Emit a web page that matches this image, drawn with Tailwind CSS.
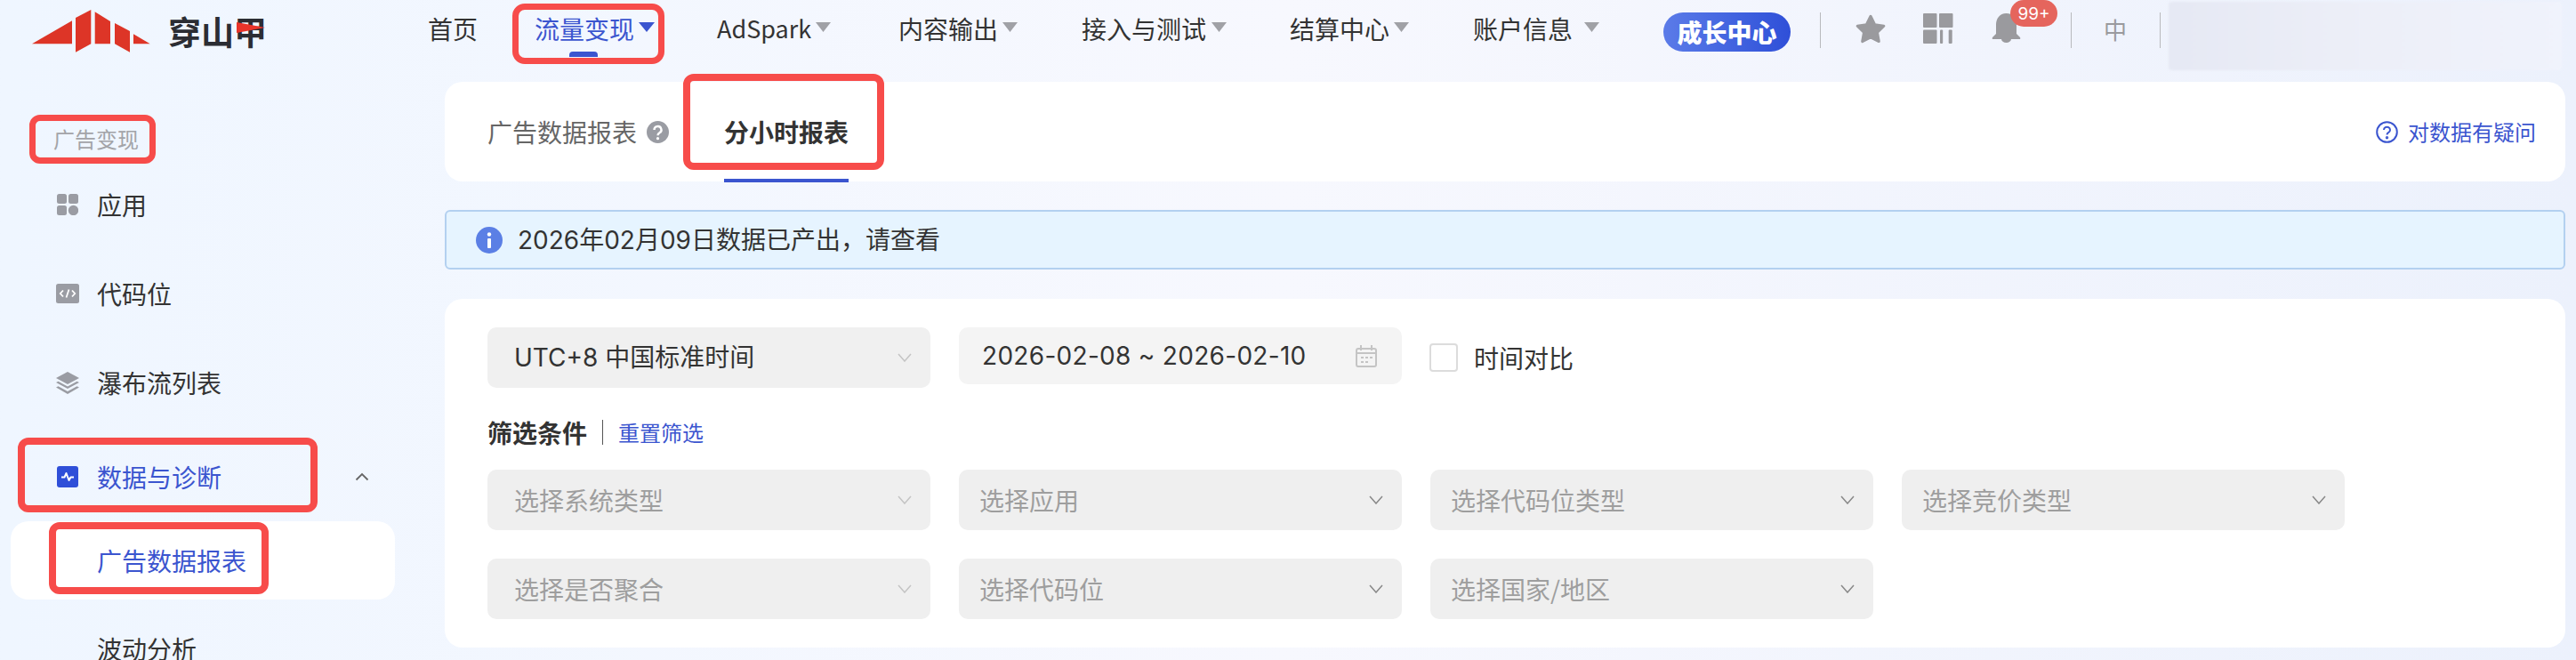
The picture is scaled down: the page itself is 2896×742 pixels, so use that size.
<!DOCTYPE html>
<html lang="zh">
<head>
<meta charset="utf-8">
<script src="https://cdn.jsdelivr.net/npm/@tailwindcss/browser@4"></script>
<title>穿山甲</title>
</head>
<body class="m-0">
<div class="relative w-[2896px] h-[742px] overflow-hidden bg-gradient-to-r from-[#eff6ff] via-[#f7f8fe] to-[#ecf1fc] font-['Inter','Noto_Sans_CJK_SC',sans-serif] text-[#333]">

  <!-- Top bar -->
  <header class="relative flex h-[92px] items-start">
    <div class="w-[481px] shrink-0 flex items-start pl-[36px] pt-[11px]">
      <svg width="134" height="48" viewBox="36 11 134 48" class="shrink-0"><polygon points="36,49.300 81,23.300 81,49.300" fill="#dd3527"/><polygon points="85,20 102.300,11 102.300,49.300 85,58.700" fill="#dd3527"/><polygon points="106.700,13.300 124,24 124,49.300 106.700,49.300" fill="#dd3527"/><polygon points="129,26 146,35 146,58.700 129,49.300" fill="#dd3527"/><polygon points="150,38.300 168.700,49.300 150,49.300" fill="#dd3527"/></svg>
      <div class="relative ml-[19px] mt-[1px] text-[37px] leading-[46px] font-bold text-[#2b2d33] font-['Noto_Sans_CJK_SC']">穿山甲<svg class="absolute left-[77px] top-[13px]" width="32" height="12" viewBox="0 0 32 12"><polygon points="0,0 32,6 0,12" fill="#e8342a"/></svg></div>
    </div>
    <nav class="flex items-start text-[28px] leading-[40px] pt-[12px] text-[#333] font-['Noto_Sans_CJK_SC']">
      <span class="w-[120px]">首页</span>
      <span class="w-[205px] flex items-center text-[#3b55cf]">流量变现<svg class="ml-[5px] mb-[4px]" width="18" height="11" viewBox="0 0 18 11"><path d="M0 0h18l-9 11z" fill="#3b55cf"/></svg></span>
      <span class="w-[204px] flex items-center text-[27px]">AdSpark<svg class="ml-[5px] mb-[4px]" width="17" height="11" viewBox="0 0 17 11"><path d="M0 0h17l-8.500 11z" fill="#a0a1a6"/></svg></span>
      <span class="w-[206px] flex items-center">内容输出<svg class="ml-[5px] mb-[4px]" width="17" height="11" viewBox="0 0 17 11"><path d="M0 0h17l-8.500 11z" fill="#a0a1a6"/></svg></span>
      <span class="w-[234px] flex items-center">接入与测试<svg class="ml-[6px] mb-[4px]" width="17" height="11" viewBox="0 0 17 11"><path d="M0 0h17l-8.500 11z" fill="#a0a1a6"/></svg></span>
      <span class="w-[206px] flex items-center">结算中心<svg class="ml-[5px] mb-[4px]" width="17" height="11" viewBox="0 0 17 11"><path d="M0 0h17l-8.500 11z" fill="#a0a1a6"/></svg></span>
      <span class="w-[214px] flex items-center">账户信息<svg class="ml-[13px] mb-[4px]" width="17" height="11" viewBox="0 0 17 11"><path d="M0 0h17l-8.500 11z" fill="#a0a1a6"/></svg></span>
    </nav>
    <div class="flex items-start pt-[14px]">
      <span class="flex h-[44px] w-[143px] items-center justify-center rounded-full bg-gradient-to-r from-[#5b7be8] to-[#2f4fd8] text-[28px] font-black text-white font-['Noto_Sans_CJK_SC']">成长中心</span>
      <span class="ml-[33px] h-[40px] w-[1px] bg-[#b8b9bd]"></span>
      <svg class="ml-[38px] mt-[2px]" width="36" height="33" viewBox="0 0 24 22"><path d="M12 1.500l3.100 6.300 6.800 1-4.900 4.800 1.200 6.800L12 17.200l-6.200 3.200L7 13.600 2.100 8.800l6.800-1z" fill="#9a9a9e" stroke="#9a9a9e" stroke-width="2" stroke-linejoin="round"/></svg>
      <svg class="ml-[41px] mt-[1px]" width="34" height="34" viewBox="0 0 34 34" fill="#9a9a9e"><rect width="15.500" height="16" rx="1"/><rect x="18" width="15.500" height="16" rx="1"/><rect y="18.500" width="15.500" height="15.500" rx="1"/><rect x="19" y="18.500" width="3.200" height="15.500" rx="1"/><rect x="28.700" y="18.500" width="4" height="15.500" rx="1"/></svg>
      <div class="relative ml-[43px] mt-[1px] h-[33px] w-[33px]">
        <svg width="33" height="33" viewBox="0 0 33 33"><path d="M16.500 0C9 0 5 6 5 13v10l-4 4q-1 2 1 2h29q2 0 1-2l-4-4V13C28 6 24 0 16.500 0zM11 29h11a5.500 4 0 0 1-11 0z" fill="#9a9a9e"/></svg>
        <span class="absolute left-[21px] top-[-15px] flex h-[30px] w-[53px] items-center justify-center rounded-full bg-[#e5655d] text-[19px] leading-none text-white font-['Inter']">99+</span>
      </div>
      <span class="ml-[56px] h-[40px] w-[1px] bg-[#b8b9bd]"></span>
      <span class="ml-[36px] w-[26px] text-[26px] leading-[38px] text-[#9a9a9e] font-['Noto_Sans_CJK_SC']">中</span>
      <span class="ml-[37px] h-[40px] w-[1px] bg-[#b8b9bd]"></span>
      <div class="ml-[9px] mt-[-12px] h-[77px] w-[442px] bg-gradient-to-r from-[#e6e9f4] via-[#edeff8] to-[#f0f3fc] blur-[1px] rounded-sm"></div>
    </div>
    <span class="absolute left-[640px] top-[58px] h-[6px] w-[32px] rounded-t-[4px] bg-[#3b55cf]"></span>
  </header>

  <div class="flex items-start">
    <!-- Sidebar -->
    <aside class="w-[500px] shrink-0 pl-[12px] font-['Noto_Sans_CJK_SC']">
      <div class="h-[46px] mt-[41px] pl-[48px] text-[24px] leading-[46px] text-[#a3a4a8]">广告变现</div>
      <ul class="mt-[3px] text-[28px] w-[432px] text-[#333]">
        <li class="flex h-[96px] items-center pl-[52px]">
          <svg class="mr-[21px]" width="24" height="24" viewBox="0 0 24 24" fill="#9a9ca3"><rect width="11" height="11" rx="2.500"/><rect x="13" width="11" height="11" rx="2.500"/><rect y="13" width="11" height="11" rx="2.500"/><circle cx="18.500" cy="18.500" r="5.700"/></svg>应用
        </li>
        <li class="flex h-[104px] items-center pl-[51px]">
          <svg class="mr-[20px]" width="26" height="22" viewBox="0 0 26 22"><rect width="26" height="22" rx="2.500" fill="#9a9ca3"/><path d="M8 7.500L4.800 11 8 14.500M18 7.500l3.200 3.500-3.200 3.500M14.500 6.500l-3 9" stroke="#fff" stroke-width="1.800" fill="none"/></svg>代码位
        </li>
        <li class="flex h-[96px] items-center pl-[51px]">
          <svg class="mr-[20px]" width="26" height="25" viewBox="0 0 26 25" fill="#9a9ca3"><path d="M13 0l13 7-13 7L0 7z"/><path d="M2.500 10.800L13 16.500l10.500-5.700L26 12l-13 7-13-7z"/><path d="M2.500 16.300L13 22l10.500-5.700L26 17.500 13 25 0 17.500z"/></svg>瀑布流列表
        </li>
        <li class="flex h-[116px] items-center pl-[52px] text-[#3b55cf] relative">
          <svg class="mr-[21px]" width="24" height="24" viewBox="0 0 24 24"><rect width="24" height="24" rx="3" fill="#2f4fd8"/><path d="M5 12.500h3.500l2-4.500 3 8 2-3.500H19" stroke="#fff" stroke-width="2" fill="none" stroke-linejoin="round"/></svg>数据与诊断
          <svg class="absolute left-[387px] top-[53px]" width="16" height="10" viewBox="0 0 16 10"><path d="M1.500 8.500L8 2l6.500 6.500" stroke="#666" stroke-width="1.800" fill="none"/></svg>
        </li>
      </ul>
      <div class="flex h-[88px] w-[432px] items-center rounded-[20px] bg-white pl-[97px] text-[28px] text-[#3b55cf] mt-[-8px]">广告数据报表</div>
      <div class="mt-[35px] pl-[97px] text-[28px] leading-[40px] text-[#333]">波动分析</div>
    </aside>

    <!-- Main -->
    <main class="w-[2384px] font-['Noto_Sans_CJK_SC']">
      <section class="flex h-[112px] items-center justify-between rounded-[20px] bg-white pl-[48px] pr-[33px]">
        <div class="flex items-center h-full">
          <span class="text-[28px] text-[#666]">广告数据报表</span>
          <svg class="ml-[11px]" width="25" height="25" viewBox="0 0 25 25"><circle cx="12.500" cy="12.500" r="12.500" fill="#9a9ca3"/><path d="M8.500 10a4 3.800 0 1 1 6 3.200c-1.300.8-2 1.500-2 3" stroke="#fff" stroke-width="2.400" fill="none"/><circle cx="12.500" cy="19.700" r="1.600" fill="#fff"/></svg>
          <span class="relative ml-[62px] flex h-full items-center text-[28px] font-bold text-[#333]">分小时报表<span class="absolute bottom-[-1px] left-0 right-0 h-[4px] bg-[#3b55cf]"></span></span>
        </div>
        <div class="flex items-center text-[24px] text-[#3b55cf]">
          <svg class="mr-[11px]" width="25" height="25" viewBox="0 0 25 25" fill="none" stroke="#3b55cf" stroke-width="2"><circle cx="12.500" cy="12.500" r="11.300"/><path d="M9 10a3.500 3.300 0 1 1 5.300 2.800c-1.200.7-1.800 1.300-1.800 2.700"/><circle cx="12.500" cy="18.800" r=".7"/></svg>
          对数据有疑问
        </div>
      </section>

      <section class="mt-[32px] flex h-[67px] w-[2384px] items-center rounded-[6px] border-2 border-[#b3d0f0] bg-[#e6f4ff] pl-[33px] text-[28px] text-[#333]">
        <svg class="mr-[17px]" width="30" height="30" viewBox="0 0 30 30"><circle cx="15" cy="15" r="15" fill="#5b7fe5"/><circle cx="15" cy="8.500" r="2.200" fill="#fff"/><rect x="13" y="13" width="4" height="11" rx="1" fill="#fff"/></svg>
        <span class="font-['Inter','Noto_Sans_CJK_SC']">2026年02月09日数据已产出，请查看</span>
      </section>

      <section class="mt-[33px] h-[392px] rounded-[20px] bg-white pl-[48px] pt-[32px]">
        <div class="flex items-start gap-[32px]">
          <div class="flex h-[68px] w-[498px] items-center justify-between rounded-[10px] bg-[#f0f0f0] pl-[30px] pr-[21px] text-[28px] text-[#333]"><span class="font-['Inter','Noto_Sans_CJK_SC']">UTC+8 中国标准时间</span><svg width="16" height="10" viewBox="0 0 16 10"><path d="M1 1l7 8 7-8" stroke="#c4c4c4" stroke-width="1.500" fill="none"/></svg></div>
          <div class="flex h-[64px] w-[498px] items-center justify-between rounded-[10px] bg-[#f4f4f4] pl-[26px] pr-[28px] text-[28px] text-[#333]"><span class="font-['Inter'] tracking-[0.3px]">2026-02-08 ~ 2026-02-10</span><svg width="24" height="25" viewBox="0 0 24 25" fill="none" stroke="#c4c4c4" stroke-width="2"><rect x="1" y="4" width="22" height="20" rx="2"/><path d="M1 9h22M6 0v6M18 0v6"/><path d="M6 14h3M11 14h3M16 14h3M6 19h3M11 19h3" /></svg></div>
          <div class="flex h-[64px] items-center gap-[18px] text-[28px] text-[#333]"><span class="ml-[-1px] h-[32px] w-[32px] rounded-[4px] border-2 border-[#dcdcdc] bg-white mt-[4px]"></span><span class="mt-[4px]">时间对比</span></div>
        </div>
        <div class="mt-[35px] flex h-[30px] items-center">
          <span class="w-[112px] text-[28px] font-bold text-[#333]">筛选条件</span>
          <span class="ml-[17px] h-[28px] w-[1px] bg-[#555]"></span>
          <span class="ml-[17px] text-[24px] text-[#3b55cf]">重置筛选</span>
        </div>
        <div class="mt-[27px] grid w-[2088px] grid-cols-4 gap-[32px] text-[28px] text-[#9e9e9e]">
          <div class="flex h-[68px] items-center justify-between rounded-[10px] bg-[#efefef] pl-[30px] pr-[21px]">选择系统类型<svg width="16" height="10" viewBox="0 0 16 10"><path d="M1 1l7 8 7-8" stroke="#c4c4c4" stroke-width="1.500" fill="none"/></svg></div>
          <div class="flex h-[68px] items-center justify-between rounded-[10px] bg-[#efefef] pl-[23px] pr-[21px]">选择应用<svg width="16" height="10" viewBox="0 0 16 10"><path d="M1 1l7 8 7-8" stroke="#888" stroke-width="1.500" fill="none"/></svg></div>
          <div class="flex h-[68px] items-center justify-between rounded-[10px] bg-[#efefef] pl-[23px] pr-[21px]">选择代码位类型<svg width="16" height="10" viewBox="0 0 16 10"><path d="M1 1l7 8 7-8" stroke="#888" stroke-width="1.500" fill="none"/></svg></div>
          <div class="flex h-[68px] items-center justify-between rounded-[10px] bg-[#efefef] pl-[23px] pr-[21px]">选择竞价类型<svg width="16" height="10" viewBox="0 0 16 10"><path d="M1 1l7 8 7-8" stroke="#888" stroke-width="1.500" fill="none"/></svg></div>
          <div class="flex h-[68px] items-center justify-between rounded-[10px] bg-[#efefef] pl-[30px] pr-[21px]">选择是否聚合<svg width="16" height="10" viewBox="0 0 16 10"><path d="M1 1l7 8 7-8" stroke="#c4c4c4" stroke-width="1.500" fill="none"/></svg></div>
          <div class="flex h-[68px] items-center justify-between rounded-[10px] bg-[#efefef] pl-[23px] pr-[21px]">选择代码位<svg width="16" height="10" viewBox="0 0 16 10"><path d="M1 1l7 8 7-8" stroke="#888" stroke-width="1.500" fill="none"/></svg></div>
          <div class="flex h-[68px] items-center justify-between rounded-[10px] bg-[#efefef] pl-[23px] pr-[21px]">选择国家/地区<svg width="16" height="10" viewBox="0 0 16 10"><path d="M1 1l7 8 7-8" stroke="#888" stroke-width="1.500" fill="none"/></svg></div>
        </div>
      </section>
    </main>
  </div>

  <!-- Red annotation boxes drawn over the screenshot -->
  <div class="absolute left-[576px] top-[4px] h-[68px] w-[171px] rounded-[14px] border-[7px] border-[#f74c4a]"></div>
  <div class="absolute left-[33px] top-[129px] h-[55px] w-[142px] rounded-[12px] border-[7px] border-[#f74c4a]"></div>
  <div class="absolute left-[768px] top-[83px] h-[108px] w-[226px] rounded-[12px] border-[8px] border-[#f74c4a]"></div>
  <div class="absolute left-[20px] top-[492px] h-[84px] w-[337px] rounded-[12px] border-[8px] border-[#f74c4a]"></div>
  <div class="absolute left-[55px] top-[587px] h-[81px] w-[247px] rounded-[12px] border-[8px] border-[#f74c4a]"></div>
</div>
</body>
</html>
